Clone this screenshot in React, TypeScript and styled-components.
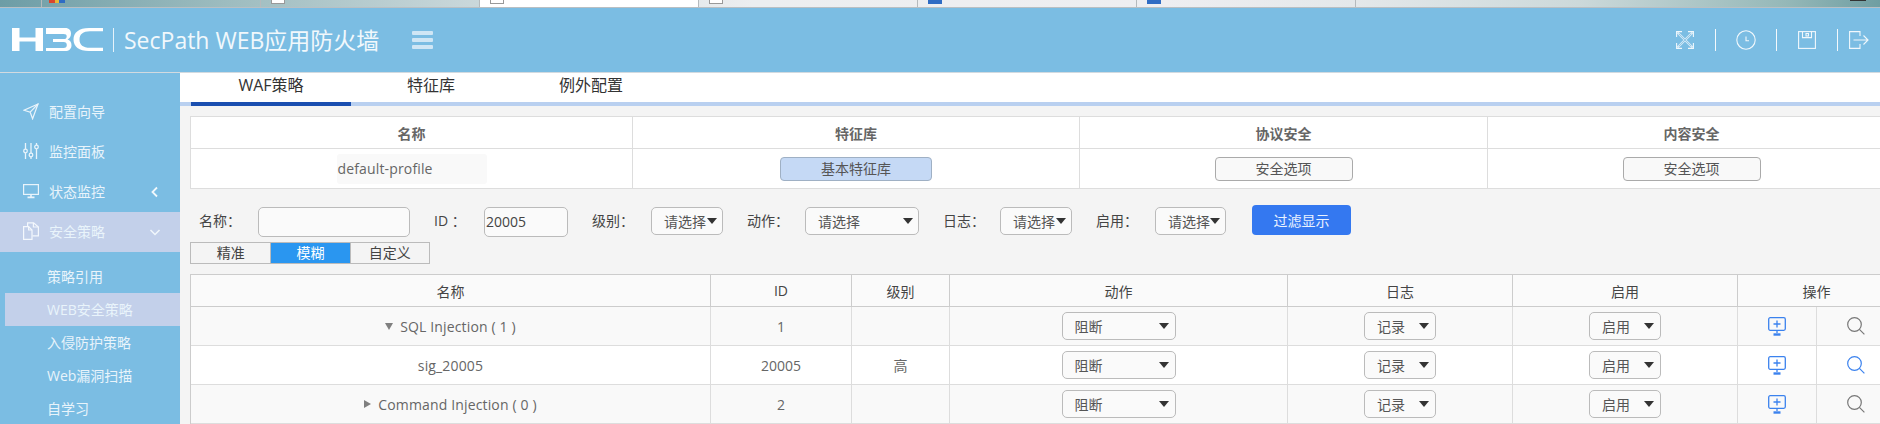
import React from "react";
import styled, { createGlobalStyle } from "styled-components";

const Global = createGlobalStyle`
  html, body { margin: 0; padding: 0; background: #f4f4f4; }
  body { font-family: "Open Sans", "Noto Sans CJK SC", sans-serif; font-size: 14px; color: #555; }
  * { box-sizing: border-box; }
`;

const Page = styled.div`
  width: 1880px; height: 424px; overflow: hidden;
  display: flex; flex-direction: column;
`;

/* browser tab strip */
const Strip = styled.div`
  height: 8px; flex: none; display: flex; overflow: hidden; padding-left: 41px;
  background: linear-gradient(90deg, #6d9da6 0, #9dbcbf 12%, #c9d7da 25%, #eceef0 40%, #eeeef1 62%, #e4e8ea 72%, #ccd9da 84%, #95b8b8 95%, #6f9ea2 100%);
  border-bottom: 1px solid #b9bfc3;
`;
const StripTab = styled.div<{ $active?: boolean }>`
  width: 219px; flex: none; border-left: 1px solid #b5babd; padding-left: 10px;
  background: ${(p) => (p.$active ? "#fff" : "transparent")};
`;
const StripIcon = styled.span<{ $c: string }>`
  display: block; width: 14px; height: 4px; background: ${(p) => p.$c};
  border: 1px solid ${(p) => (p.$c === "#fff" ? "#999" : p.$c)}; border-top: 0;
`;
const StripFlag = styled.span`
  display: block; width: 16px; height: 3px; margin-left: -3px;
  background: linear-gradient(90deg, #d8452e 0 35%, #e6b93a 35% 60%, #2f6cc4 60% 100%);
`;
const StripRest = styled.div`
  flex: 1; border-left: 1px solid #b5babd; display: flex; justify-content: flex-end; padding-right: 14px;
`;
const StripMark = styled.span`
  width: 16px; height: 1px; background: #333;
`;

/* header */
const Header = styled.header`
  height: 65px; flex: none; background: #7bbde3; border-bottom: 1px solid #d2dae0;
  display: flex; align-items: center; padding-left: 12px; position: relative;
`;
const LogoDivider = styled.span`
  width: 1px; height: 24px; background: #e6f2fa; margin: 0 10px 0 9px;
`;
const Title = styled.h1`
  margin: 0; font-weight: 400; font-size: 23px; line-height: 30px; color: #f1f8fc;
  font-family: "Open Sans", "Noto Sans CJK SC", sans-serif; white-space: nowrap; width: 288px;
`;
const Burger = styled.span`
  width: 21px; display: flex; flex-direction: column; gap: 3.5px;
  i { display: block; height: 3.5px; background: #cfe6f5; border-radius: 1px; }
`;
const HeaderTools = styled.div`
  margin-left: auto; display: flex; align-items: center; width: 225px; flex: none;
`;
const ToolDivider = styled.span`
  width: 1px; height: 22px; background: #f4f9fc; flex: none;
`;
const ToolSlot = styled.span<{ $w: number }>`
  width: ${(p) => p.$w}px; flex: none; display: flex; justify-content: center;
`;

/* body */
const Body = styled.div`
  flex: 1; display: flex; min-height: 0;
`;
const Side = styled.nav`
  width: 180px; flex: none; background: #7bbde3; padding-top: 19px; color: #e9f4fb;
`;
const SideItem = styled.div<{ $open?: boolean }>`
  height: 40px; display: flex; align-items: center; padding: 0 0 2px 23px; position: relative;
  background: ${(p) => (p.$open ? "#c3d0ea" : "transparent")};
  font-size: 14px;
  svg.lead { width: 16px; height: 18px; margin-right: 10px; flex: none; }
`;
const Chevron = styled.svg`
  position: absolute; left: 149px; top: 14px; width: 12px; height: 12px;
`;
const SubList = styled.div`
  padding-top: 8px;
`;
const SubItem = styled.div<{ $active?: boolean }>`
  height: 33px; margin-left: 5px; padding: 0 0 2px 42px; display: flex; align-items: center;
  font-size: 14px; background: ${(p) => (p.$active ? "#c3d0ea" : "transparent")};
`;

const Main = styled.main`
  flex: 1; min-width: 0; overflow: hidden; background: #f4f4f4;
`;
const Tabs = styled.div`
  height: 33px; background: #fff; border-bottom: 4px solid #b9d0f0; display: flex; padding-left: 11px;
`;
const Tab = styled.div<{ $active?: boolean }>`
  width: 160px; height: 33px; display: flex; align-items: center; justify-content: center; padding-bottom: 5px;
  font-size: 16px; color: #333; line-height: 20px;
  border-bottom: 4px solid ${(p) => (p.$active ? "#1a4fb0" : "transparent")};
`;
const Content = styled.div`
  width: 1715px; padding: 10px 0 0 10px;
`;

const Summary = styled.section`
  display: grid; grid-template-columns: 442px 447px 408px 408px; grid-template-rows: 32px 40px;
  border-top: 1px solid #ddd; border-left: 1px solid #ddd; background: #fff;
`;
const SumHead = styled.div`
  display: flex; align-items: center; justify-content: center;
  border-right: 1px solid #ddd; border-bottom: 1px solid #ddd;
  font-size: 14px; font-weight: 700; color: #666;
`;
const SumCell = styled.div`
  display: flex; align-items: center; justify-content: center;
  border-right: 1px solid #ddd; border-bottom: 1px solid #ddd;
`;
const ProfileName = styled.div`
  width: 150px; height: 30px; background: #f9f9f9; border-radius: 3px; padding-left: 1px;
  font-size: 14px; line-height: 30px; color: #666; letter-spacing: 0.15px;
`;
const OptionBtn = styled.button<{ $on?: boolean }>`
  height: 24px; width: ${(p) => (p.$on ? 152 : 138)}px; padding: 0; border-radius: 4px; font: inherit; font-size: 14px; line-height: 20px;
  color: #555; background: ${(p) => (p.$on ? "#c5d9f5" : "#f9f9f9")};
  border: 1px solid ${(p) => (p.$on ? "#9fb0c4" : "#aaa")};
`;

const Filter = styled.div`
  display: flex; align-items: flex-start; margin-top: 16px; height: 32px;
`;
const FieldLabel = styled.label<{ $w: number; $first?: boolean }>`
  width: ${(p) => p.$w}px; flex: none; height: 30px; line-height: 30px; font-size: 14px; color: #444;
  margin-left: ${(p) => (p.$first ? "9px" : "24px")};
  margin-top: 1px; white-space: pre;
`;
const TextBox = styled.div<{ $w: number }>`
  width: ${(p) => p.$w}px; height: 30px; flex: none; margin-top: 2px; border: 1px solid #bbb; border-radius: 5px;
  background: #fafafa; font-size: 14px; line-height: 28px; color: #444; padding-left: 1px;
`;
const Select = styled.div<{ $w: number; $boxed?: boolean; $pad?: number }>`
  width: ${(p) => p.$w}px; height: 28px; flex: none; border: 1px solid #bbb; border-radius: 5px;
  background: #fafafa; display: flex; align-items: center; justify-content: space-between;
  padding: 0 3px 0 ${(p) => p.$pad ?? 12}px; font-size: 14px; color: #555; margin-top: ${(p) => (p.$boxed ? 2 : 0)}px;
  &::after { content: ""; border-left: 5px solid transparent; border-right: 5px solid transparent; border-top: 6px solid #333; margin-right: 2px; }
`;
const Primary = styled.button`
  width: 99px; height: 30px; flex: none; margin-left: 26px; border: 0; border-radius: 4px;
  background: #3478f0; color: #eaf2ff; font: inherit; font-size: 14px; padding: 0;
`;

const Segments = styled.div`
  display: inline-flex; margin-top: 5px; height: 22px; border: 1px solid #bbb; vertical-align: top;
`;
const Segment = styled.div<{ $active?: boolean }>`
  width: 79.33px; display: flex; align-items: center; justify-content: center; font-size: 14px; line-height: 18px;
  color: ${(p) => (p.$active ? "#fff" : "#444")}; background: ${(p) => (p.$active ? "#2a96f0" : "transparent")};
  & + & { border-left: 1px solid #bbb; }
`;

const RuleTable = styled.section`
  margin-top: 10px; display: grid;
  grid-template-columns: 520px 141px 98px 338px 225px 225px 79px 79px;
  grid-template-rows: 32px repeat(3, 39px);
  border-top: 1px solid #ccc; border-left: 1px solid #ccc;
`;
const Th = styled.div<{ $span?: number }>`
  grid-column: span ${(p) => p.$span ?? 1};
  display: flex; align-items: center; justify-content: center; background: #fafafa;
  border-right: 1px solid #ccc; border-bottom: 1px solid #ccc; font-size: 14px; color: #444;
`;
const Td = styled.div<{ $alt: boolean }>`
  display: flex; align-items: center; justify-content: center;
  background: ${(p) => (p.$alt ? "#f9f9f9" : "#fff")};
  border-right: 1px solid #ddd; border-bottom: 1px solid #ddd; font-size: 14px; color: #666;
`;
const NameTd = styled(Td)`
  letter-spacing: 0.15px;
`;
const Caret = styled.span<{ $open: boolean }>`
  width: 0; height: 0; margin-right: 7px; border-style: solid; border-color: transparent;
  ${(p) =>
    p.$open
      ? "border-width: 7px 4.5px 0; border-top-color: #808080;"
      : "border-width: 4.5px 0 4.5px 7px; border-left-color: #808080;"}
`;
const RowSelect = styled(Select)`
  padding-left: 12px; padding-right: 4px;
`;

const Nav = () => (
  <svg className="lead" viewBox="0 0 16 18" fill="none" stroke="#e9f4fb" strokeWidth="1.2">
    <path d="M15 2 1 8.2l6.2 2 2.4 6.6Z" /><path d="M15 2 7.2 10.2" />
  </svg>
);
const Sliders = () => (
  <svg className="lead" viewBox="0 0 16 18" fill="none" stroke="#e9f4fb" strokeWidth="1.3">
    <path d="M2.5 1v6M2.5 11v6M8 1v10M8 15v2M13.5 1v2M13.5 7v10" />
    <circle cx="2.5" cy="9" r="1.8" /><circle cx="8" cy="13" r="1.8" /><circle cx="13.5" cy="5" r="1.8" />
  </svg>
);
const Monitor = () => (
  <svg className="lead" viewBox="0 0 16 18" fill="none" stroke="#e9f4fb" strokeWidth="1.2">
    <rect x="0.6" y="2.6" width="14.8" height="9.8" /><path d="M8 12.5v2.5M4.5 15.4h7" strokeWidth="1.6" />
  </svg>
);
const Copy = () => (
  <svg className="lead" viewBox="0 0 16 18" fill="none" stroke="#f4f8fd" strokeWidth="1.2">
    <path d="M.6 4.6h5l3.4 3.4v9.4H.6Z" /><path d="M5.6 4.6V8H9" /><path d="M4.6 4V.8h6l4.8 4.2v8.8H9.5" /><path d="M10.4 1v4h5" />
  </svg>
);

const Logo = () => (
  <svg width="92" height="24" viewBox="0 0 92 24" fill="#fff" style={{ flex: "none" }}>
    <path d="M0 0h7.500v9.500h16V0H31v23h-7.500V13.500h-16V23H0Z" />
    <path d="M34 0h19c4.500 0 6 2.500 6 5.500 0 3-1.300 5-3.500 6 2.600.8 4 2.800 4 5.700 0 3.500-2.300 5.800-6.500 5.800H34v-3h17.500c2.400 0 3.300-1.200 3.300-3s-1-3-3.200-3H41v-3h10.500c2.300 0 3.200-1 3.200-2.600 0-1.700-.9-2.400-3.200-2.400H34Z" />
    <path d="M91 0H77C67 0 61.500 4.500 61.500 11.500S67 23 77 23h14v-3.200H78c-7 0-10.500-3-10.500-8.300S71 3.200 78 3.200h13Z" />
  </svg>
);

const Fullscreen = () => (
  <svg width="18" height="18" viewBox="0 0 18 18" fill="none" stroke="#f1f8fc" strokeWidth="1.1">
    <path d="M.6 6V.6H6M12 .6h5.400V6M.6 12v5.400H6M12 17.400h5.400V12" />
    <path d="m1.500 1.500 15 15M16.500 1.500l-15 15" strokeWidth="2.400" opacity=".75" />
    <path d="m3 3 12 12M15 3 3 15" stroke="#7bbde3" strokeWidth=".7" />
  </svg>
);
const Clock = () => (
  <svg width="20" height="20" viewBox="0 0 20 20" fill="none" stroke="#f1f8fc" strokeWidth="1.100">
    <circle cx="10" cy="10" r="9.200" /><path d="M10 6.500v4.200h3" />
  </svg>
);
const Floppy = () => (
  <svg width="18" height="18" viewBox="0 0 18 18" fill="none" stroke="#f1f8fc" strokeWidth="1.100">
    <rect x=".6" y=".6" width="16.800" height="16.800" /><path d="M4.500 .6v6h9v-6" /><rect x="8" y="2.500" width="2.500" height="2.500" />
  </svg>
);
const Exit = () => (
  <svg width="20" height="18" viewBox="0 0 20 18" fill="none" stroke="#f1f8fc" strokeWidth="1.100">
    <path d="M11 5V.6H.6v16.800H11V13" /><path d="M4.500 9h14.500M14.500 4.500 19 9l-4.500 4.500" />
  </svg>
);

const AddScreen = () => (
  <svg width="18" height="19" viewBox="0 0 18 19" fill="none" stroke="#3b82ee" strokeWidth="1.300">
    <rect x=".7" y=".7" width="16.600" height="12.600" rx="1.500" />
    <path d="M9 3.500v7M5.500 7h7M9 13v3" />
    <path d="M5.500 17.500h7" strokeWidth="2.400" />
  </svg>
);
const Search = ({ c }: { c: string }) => (
  <svg width="18" height="18" viewBox="0 0 18 18" fill="none" stroke={c} strokeWidth="1.200">
    <circle cx="7.500" cy="7.500" r="6.800" /><path d="m12.400 12.400 5 5" />
  </svg>
);

const rows = [
  { name: "SQL Injection ( 1 )", caret: "open", id: "1", level: "" },
  { name: "sig_20005", caret: "", id: "20005", level: "高" },
  { name: "Command Injection ( 0 )", caret: "closed", id: "2", level: "" },
];

export default function App() {
  return (
    <Page>
      <Global />
      <Strip>
        <StripTab><StripFlag /></StripTab>
        <StripTab><StripIcon $c="#fff" /></StripTab>
        <StripTab $active><StripIcon $c="#fff" /></StripTab>
        <StripTab><StripIcon $c="#fff" /></StripTab>
        <StripTab><StripIcon $c="#2f6cc4" /></StripTab>
        <StripTab><StripIcon $c="#2f6cc4" /></StripTab>
        <StripRest><StripMark /></StripRest>
      </Strip>
      <Header>
        <Logo />
        <LogoDivider />
        <Title>SecPath WEB应用防火墙</Title>
        <Burger><i /><i /><i /></Burger>
        <HeaderTools>
          <ToolSlot $w={60}><Fullscreen /></ToolSlot>
          <ToolDivider />
          <ToolSlot $w={60}><Clock /></ToolSlot>
          <ToolDivider />
          <ToolSlot $w={60}><Floppy /></ToolSlot>
          <ToolDivider />
          <ToolSlot $w={42}><Exit /></ToolSlot>
        </HeaderTools>
      </Header>
      <Body>
        <Side>
          <SideItem><Nav />配置向导</SideItem>
          <SideItem><Sliders />监控面板</SideItem>
          <SideItem>
            <Monitor />状态监控
            <Chevron viewBox="0 0 12 12" fill="none" stroke="#f1f8fc" strokeWidth="1.800"><path d="M8 1.500 3.500 6 8 10.500" /></Chevron>
          </SideItem>
          <SideItem $open>
            <Copy />安全策略
            <Chevron viewBox="0 0 12 12" fill="none" stroke="#f1f8fc" strokeWidth="1.500"><path d="M1.500 4 6 8.500 10.500 4" /></Chevron>
          </SideItem>
          <SubList>
            <SubItem>策略引用</SubItem>
            <SubItem $active>WEB安全策略</SubItem>
            <SubItem>入侵防护策略</SubItem>
            <SubItem>Web漏洞扫描</SubItem>
            <SubItem>自学习</SubItem>
          </SubList>
        </Side>
        <Main>
          <Tabs>
            <Tab $active>WAF策略</Tab>
            <Tab>特征库</Tab>
            <Tab>例外配置</Tab>
          </Tabs>
          <Content>
            <Summary>
              <SumHead>名称</SumHead>
              <SumHead>特征库</SumHead>
              <SumHead>协议安全</SumHead>
              <SumHead>内容安全</SumHead>
              <SumCell><ProfileName>default-profile</ProfileName></SumCell>
              <SumCell><OptionBtn $on>基本特征库</OptionBtn></SumCell>
              <SumCell><OptionBtn>安全选项</OptionBtn></SumCell>
              <SumCell><OptionBtn>安全选项</OptionBtn></SumCell>
            </Summary>
            <Filter>
              <FieldLabel $w={59} $first>名称：</FieldLabel>
              <TextBox $w={152} />
              <FieldLabel $w={50}>ID ：</FieldLabel>
              <TextBox $w={84}>20005</TextBox>
              <FieldLabel $w={59}>级别：</FieldLabel>
              <Select $w={72} $boxed>请选择</Select>
              <FieldLabel $w={58}>动作：</FieldLabel>
              <Select $w={114} $boxed>请选择</Select>
              <FieldLabel $w={57}>日志：</FieldLabel>
              <Select $w={72} $boxed>请选择</Select>
              <FieldLabel $w={59}>启用：</FieldLabel>
              <Select $w={71} $boxed>请选择</Select>
              <Primary>过滤显示</Primary>
            </Filter>
            <Segments>
              <Segment>精准</Segment>
              <Segment $active>模糊</Segment>
              <Segment>自定义</Segment>
            </Segments>
            <RuleTable>
              <Th>名称</Th>
              <Th>ID</Th>
              <Th>级别</Th>
              <Th>动作</Th>
              <Th>日志</Th>
              <Th>启用</Th>
              <Th $span={2}>操作</Th>
              {rows.map((r, i) => {
                const alt = i % 2 === 0;
                return (
                  <React.Fragment key={r.id}>
                    <NameTd $alt={alt}>
                      {r.caret && <Caret $open={r.caret === "open"} />}
                      {r.name}
                    </NameTd>
                    <Td $alt={alt}>{r.id}</Td>
                    <Td $alt={alt}>{r.level}</Td>
                    <Td $alt={alt}><RowSelect $w={114}>阻断</RowSelect></Td>
                    <Td $alt={alt}><RowSelect $w={72}>记录</RowSelect></Td>
                    <Td $alt={alt}><RowSelect $w={72}>启用</RowSelect></Td>
                    <Td $alt={alt}><AddScreen /></Td>
                    <Td $alt={alt}><Search c={alt ? "#777" : "#3b82ee"} /></Td>
                  </React.Fragment>
                );
              })}
            </RuleTable>
          </Content>
        </Main>
      </Body>
    </Page>
  );
}
